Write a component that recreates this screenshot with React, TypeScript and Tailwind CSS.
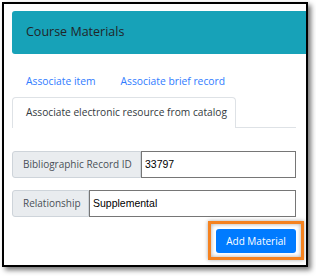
import React from "react";

export default function App() {
  const sans = { fontFamily: '"Open Sans", "Noto Sans", sans-serif' };
  return (
    <div className="w-[316px] h-[276px] bg-white overflow-hidden" style={sans}>
      <div className="ml-[2px] mt-[2px] w-[306px] h-[265px] border-2 border-black bg-white shadow-[3px_3px_5px_rgba(0,0,0,0.55)] overflow-hidden pl-[8px] pt-[7px] flex flex-col">
        <div className="h-[43px] bg-[#17a2b8] rounded-l-[3px] flex items-center pl-[14px] text-[12.5px] text-[#212529]">
          Course Materials
        </div>
        <div className="pr-[10px] flex flex-col">
          <div className="mt-[19px] h-[18px] flex items-center pl-[14px] gap-[25px] text-[10.3px] text-[#2f7cff]">
            <span>Associate item</span>
            <span>Associate brief record</span>
          </div>
          <div className="mt-[6px] flex items-end">
            <div className="h-[31px] w-[224px] border border-b-0 border-[#dee2e6] rounded-t-[4px] flex items-center pl-[13px] pb-[1px] text-[10.2px] text-[#343a40]">
              Associate electronic resource from catalog
            </div>
            <div className="flex-1 border-b border-[#dee2e6]" />
          </div>
          <div className="mt-[23px] h-[27px] flex">
            <div className="w-[129px] bg-[#e9ecef] border border-[#ced4da] rounded-l-[3px] flex items-center pl-[10px] text-[10px] text-[#495057]">
              Bibliographic Record ID
            </div>
            <div
              className="flex-1 border border-[#767676] flex items-center pl-[3px] text-[10.5px] text-black"
              style={{ fontFamily: '"Liberation Sans", Arial, sans-serif' }}
            >
              33797
            </div>
          </div>
          <div className="mt-[12px] h-[27px] flex">
            <div className="w-[77px] bg-[#e9ecef] border border-[#ced4da] rounded-l-[3px] flex items-center pl-[10px] text-[10px] text-[#495057]">
              Relationship
            </div>
            <div
              className="flex-1 border border-[#767676] flex items-center pl-[3px] text-[10.5px] text-black"
              style={{ fontFamily: '"Liberation Sans", Arial, sans-serif' }}
            >
              Supplemental
            </div>
          </div>
          <div className="mt-[4px] flex justify-end -mr-[8px]">
            <div className="border-[3px] border-[#f5821f] pt-[5px] pb-[4px] px-[5px] shadow-[0_0_4px_rgba(0,0,0,0.35),inset_0_0_4px_rgba(0,0,0,0.35)]">
              <div className="w-[80px] h-[24px] bg-[#007bff] rounded-[3px] flex items-center justify-center text-[10px] text-white">
                Add Material
              </div>
            </div>
          </div>
        </div>
      </div>
    </div>
  );
}
